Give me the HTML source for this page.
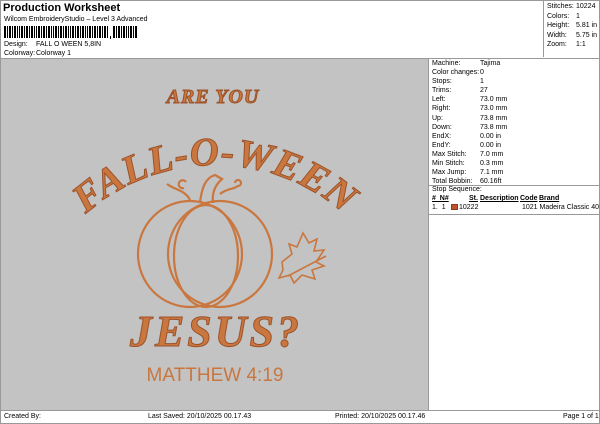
<!DOCTYPE html>
<html><head><meta charset="utf-8"><style>
*{margin:0;padding:0;box-sizing:border-box}
body{width:600px;height:424px;background:#fff;font-family:"Liberation Sans",sans-serif;color:#000;position:relative;overflow:hidden}
.a{position:absolute;white-space:nowrap}
.s{font-size:7px}
</style></head><body>
<div class="a" style="left:0;top:0;width:600px;height:424px;border:1px solid #999"></div>
<div class="a" style="left:3px;top:2px;font-size:11px;font-weight:bold">Production Worksheet</div>
<div class="a s" style="left:4px;top:16px">Wilcom EmbroideryStudio – Level 3 Advanced</div>
<svg class="a" style="left:4px;top:26px" width="136" height="13">
<g fill="#000">
<rect x="0" y="0" width="2" height="12"/><rect x="3" y="0" width="1" height="12"/><rect x="5" y="0" width="2" height="12"/><rect x="8" y="0" width="1" height="12"/><rect x="10" y="0" width="2" height="12"/><rect x="13" y="0" width="1" height="12"/><rect x="15" y="0" width="1" height="12"/><rect x="17" y="0" width="2" height="12"/><rect x="20" y="0" width="1" height="12"/><rect x="22" y="0" width="2" height="12"/><rect x="25" y="0" width="1" height="12"/><rect x="27" y="0" width="2" height="12"/><rect x="30" y="0" width="1" height="12"/><rect x="32" y="0" width="1" height="12"/><rect x="34" y="0" width="2" height="12"/><rect x="37" y="0" width="1" height="12"/><rect x="39" y="0" width="2" height="12"/><rect x="42" y="0" width="1" height="12"/><rect x="44" y="0" width="2" height="12"/><rect x="47" y="0" width="1" height="12"/><rect x="49" y="0" width="1" height="12"/><rect x="51" y="0" width="2" height="12"/><rect x="54" y="0" width="1" height="12"/><rect x="56" y="0" width="2" height="12"/><rect x="59" y="0" width="1" height="12"/><rect x="61" y="0" width="2" height="12"/><rect x="64" y="0" width="1" height="12"/><rect x="66" y="0" width="1" height="12"/><rect x="68" y="0" width="2" height="12"/><rect x="71" y="0" width="1" height="12"/><rect x="73" y="0" width="2" height="12"/><rect x="76" y="0" width="1" height="12"/><rect x="78" y="0" width="2" height="12"/><rect x="81" y="0" width="1" height="12"/><rect x="83" y="0" width="1" height="12"/><rect x="85" y="0" width="2" height="12"/><rect x="88" y="0" width="1" height="12"/><rect x="90" y="0" width="2" height="12"/><rect x="93" y="0" width="1" height="12"/><rect x="95" y="0" width="2" height="12"/><rect x="98" y="0" width="1" height="12"/><rect x="100" y="0" width="2" height="12"/><rect x="103" y="0" width="1" height="12"/><rect x="106" y="10" width="1" height="3"/><rect x="109" y="0" width="2" height="12"/><rect x="112" y="0" width="1" height="12"/><rect x="114" y="0" width="2" height="12"/><rect x="117" y="0" width="1" height="12"/><rect x="119" y="0" width="2" height="12"/><rect x="122" y="0" width="1" height="12"/><rect x="124" y="0" width="1" height="12"/><rect x="126" y="0" width="2" height="12"/><rect x="129" y="0" width="1" height="12"/><rect x="131" y="0" width="2" height="12"/></g></svg>
<div class="a s" style="left:4px;top:41px">Design:</div><div class="a s" style="left:36px;top:41px">FALL O WEEN 5,8IN</div>
<div class="a s" style="left:4px;top:50px">Colorway:</div><div class="a s" style="left:36px;top:50px">Colorway 1</div>
<div class="a" style="left:543px;top:0;width:1px;height:57px;background:#999"></div>
<div class="a s" style="left:547px;top:2px;line-height:9.6px">Stitches:<br>Colors:<br>Height:<br>Width:<br>Zoom:</div>
<div class="a s" style="left:576px;top:2px;line-height:9.6px">10224<br>1<br>5.81 in<br>5.75 in<br>1:1</div>
<div class="a" style="left:0;top:58px;width:600px;height:1px;background:#999"></div>
<div class="a" style="left:1px;top:59px;width:427px;height:351px;background:#c3c3c3"></div>
<div class="a" style="left:428px;top:59px;width:1px;height:351px;background:#999"></div>
<div class="a s" style="left:432px;top:59px;line-height:9.1px">Machine:<br>Color changes:<br>Stops:<br>Trims:<br>Left:<br>Right:<br>Up:<br>Down:<br>EndX:<br>EndY:<br>Max Stitch:<br>Min Stitch:<br>Max Jump:<br>Total Bobbin:</div>
<div class="a s" style="left:480px;top:59px;line-height:9.1px">Tajima<br>0<br>1<br>27<br>73.0 mm<br>73.0 mm<br>73.8 mm<br>73.8 mm<br>0.00 in<br>0.00 in<br>7.0 mm<br>0.3 mm<br>7.1 mm<br>60.16ft</div>
<div class="a" style="left:429px;top:185px;width:171px;height:1px;background:#999"></div>
<div class="a s" style="left:432px;top:186px">Stop Sequence:</div>
<div class="a s" style="left:432px;top:195px;font-weight:bold;text-decoration:underline">#&nbsp; N#</div>
<div class="a s" style="left:469px;top:195px;font-weight:bold;text-decoration:underline">St.</div>
<div class="a s" style="left:480px;top:195px;font-weight:bold;text-decoration:underline">Description</div>
<div class="a s" style="left:520px;top:195px;font-weight:bold;text-decoration:underline">Code</div>
<div class="a s" style="left:539px;top:195px;font-weight:bold;text-decoration:underline">Brand</div>
<div class="a s" style="left:432px;top:204px">1.&nbsp; 1</div>
<div class="a" style="left:451px;top:204px;width:7px;height:6px;background:#c0532c;border:1px solid #8a3a20"></div>
<div class="a s" style="left:459px;top:204px">10222</div>
<div class="a s" style="left:522px;top:204px">1021 Madeira Classic 40</div>
<div class="a" style="left:429px;top:214px;width:171px;height:1px;background:#999"></div>
<div class="a" style="left:0;top:410px;width:600px;height:1px;background:#999"></div>
<div class="a s" style="left:4px;top:413px">Created By:</div>
<div class="a s" style="left:148px;top:413px">Last Saved: 20/10/2025 00.17.43</div>
<div class="a s" style="left:335px;top:413px">Printed: 20/10/2025 00.17.46</div>
<div class="a s" style="left:563px;top:413px">Page 1 of 1</div>

<svg class="a" style="left:0;top:0" width="430" height="410">
<defs><path id="arc" d="M20,360 A195,195 0 0 1 410,360"/></defs>
<g fill="#c9773f" stroke="#9c522a" stroke-width="1" font-family="Liberation Serif,serif" font-weight="bold" font-style="italic">
<text x="213" y="103" font-size="20" text-anchor="middle" letter-spacing="1">ARE YOU</text>
<text font-size="40" letter-spacing="1"><textPath href="#arc" startOffset="50%" text-anchor="middle">FALL-O-WEEN</textPath></text>
<text x="216" y="346" font-size="44" text-anchor="middle" letter-spacing="3">JESUS?</text>
</g>
<text x="215" y="381" font-size="19" fill="#c9773f" text-anchor="middle" font-family="Liberation Sans,sans-serif">MATTHEW 4:19</text>
<g fill="none" stroke="#c9773f" stroke-width="2.2">
<ellipse cx="190" cy="254" rx="52" ry="53"/>
<ellipse cx="220" cy="254" rx="52" ry="53"/>
<ellipse cx="206" cy="256" rx="32" ry="51"/>
<path d="M200,202 C202,188 205,178 215,175 L222,179 C214,186 212,195 213,203"/>
<path d="M167,184 C175,190 185,190 190,200 M184,188 a4,4 0 1 1 2,-6"/>
<path d="M220,194 C228,188 232,190 238,186 a3,3 0 1 0 -3,-3"/>
<path d="M282,262 l10,-8 -3,-10 8,3 6,-14 6,10 8,-4 -3,12 10,-1 -8,12 8,4 -12,4 3,9 -13,-4 -8,8 -4,-8 -11,3 4,-8z M288,276 L326,256" stroke-width="1.6"/>
</g>
</svg>
</body></html>
